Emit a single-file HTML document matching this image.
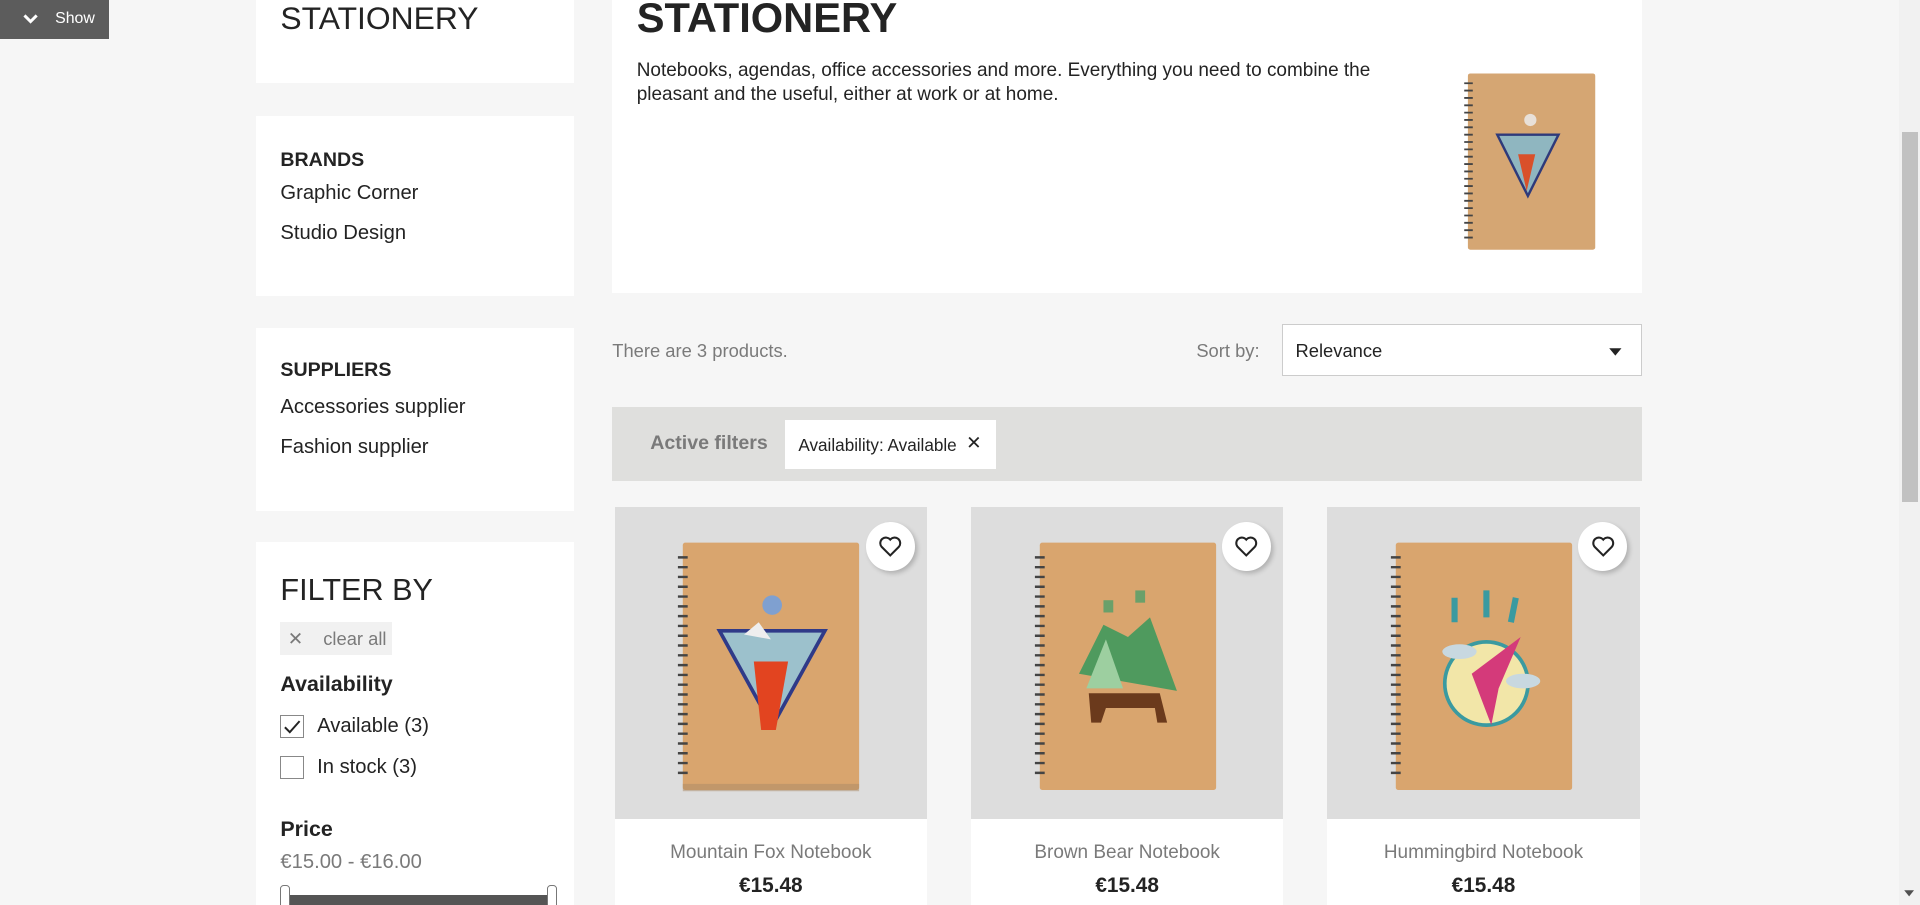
<!DOCTYPE html>
<html><head><meta charset="utf-8"><style>
html,body{margin:0;padding:0;background:#f6f6f6;overflow:hidden}
#w{zoom:1.22449;position:relative;width:1568px;height:739px;font-family:"Liberation Sans",sans-serif;color:#232323}
.a{position:absolute}
.card{position:absolute;background:#fff}
.t{position:absolute;white-space:nowrap}
</style></head><body><div id="w">
<div class="a" style="left:0;top:0;width:89px;height:32px;background:#5c5c5c"></div>
<svg class="a" style="left:18px;top:11px" width="14" height="10" viewBox="0 0 14 10"><path d="M2 2l5 5 5-5" stroke="#fff" stroke-width="2.4" fill="none"/></svg>
<div class="t" style="left:45px;top:8px;color:#fff;font-size:13px">Show</div>

<div class="card" style="left:209px;top:0;width:260px;height:68px"></div>
<div class="t" style="left:229px;top:0px;font-size:26px">STATIONERY</div>

<div class="card" style="left:209px;top:95px;width:260px;height:147px"></div>
<div class="t" style="left:229px;top:122px;font-size:16px;font-weight:bold">BRANDS</div>
<div class="t" style="left:229px;top:149px;font-size:16.5px">Graphic Corner</div>
<div class="t" style="left:229px;top:181px;font-size:16.5px">Studio Design</div>

<div class="card" style="left:209px;top:268px;width:260px;height:149px"></div>
<div class="t" style="left:229px;top:293px;font-size:16px;font-weight:bold">SUPPLIERS</div>
<div class="t" style="left:229px;top:323px;font-size:16.5px">Accessories supplier</div>
<div class="t" style="left:229px;top:356px;font-size:16.5px">Fashion supplier</div>

<div class="card" style="left:209px;top:443px;width:260px;height:300px"></div>
<div class="t" style="left:229px;top:468px;font-size:25px">FILTER BY</div>
<div class="a" style="left:229px;top:508px;width:91px;height:27px;background:#f1f1f1"></div>
<div class="t" style="left:235px;top:513px;font-size:15px;color:#7a7a7a">✕</div>
<div class="t" style="left:264px;top:513px;font-size:15px;color:#7a7a7a">clear all</div>
<div class="t" style="left:229px;top:549px;font-size:17.5px;font-weight:bold">Availability</div>
<div class="a" style="left:229px;top:584px;width:19px;height:19px;border:1px solid #888;box-sizing:border-box"></div>
<svg class="a" style="left:229px;top:584px" width="20" height="20"><path d="M4 10l4 4 8-9" stroke="#232323" stroke-width="1.6" fill="none"/></svg>
<div class="t" style="left:259px;top:584px;font-size:16.5px">Available (3)</div>
<div class="a" style="left:229px;top:617px;width:19px;height:19px;border:1px solid #888;box-sizing:border-box"></div>
<div class="t" style="left:259px;top:617px;font-size:16.5px">In stock (3)</div>
<div class="t" style="left:229px;top:667px;font-size:17.5px;font-weight:bold">Price</div>
<div class="t" style="left:229px;top:695px;font-size:16.5px;color:#7a7a7a">€15.00 - €16.00</div>
<div class="a" style="left:232px;top:731px;width:220px;height:8px;background:#555"></div>
<div class="a" style="left:229px;top:723px;width:6px;height:20px;border:1px solid #777;border-radius:3px;background:#fff"></div>
<div class="a" style="left:447px;top:723px;width:6px;height:20px;border:1px solid #777;border-radius:3px;background:#fff"></div>

<div class="card" style="left:500px;top:0;width:841px;height:239px"></div>
<div class="t" style="left:520px;top:-5px;font-size:34px;font-weight:bold">STATIONERY</div>
<div class="t" style="left:520px;top:48px;font-size:15.5px;line-height:20px;color:#232323">Notebooks, agendas, office accessories and more. Everything you need to combine the<br>pleasant and the useful, either at work or at home.</div>
<svg class="a" style="left:1195px;top:58px" width="110" height="148" viewBox="0 0 110 148">
<rect x="4" y="2" width="104" height="144" rx="2" fill="#d5a673"/>
<g stroke="#444" stroke-width="1.5">
<path d="M1 10h7M1 16h7M1 22h7M1 28h7M1 34h7M1 40h7M1 46h7M1 52h7M1 58h7M1 64h7M1 70h7M1 76h7M1 82h7M1 88h7M1 94h7M1 100h7M1 106h7M1 112h7M1 118h7M1 124h7M1 130h7M1 136h7"/></g>
<circle cx="55" cy="40" r="5" fill="#e8e0d8"/>
<path d="M28 52h50l-25 50z" fill="#8fb6c0" stroke="#2f3a7a" stroke-width="2"/>
<path d="M45 68h14l-7 30z" fill="#d9502a"/>
</svg>

<div class="t" style="left:500px;top:278px;font-size:15px;color:#7a7a7a">There are 3 products.</div>
<div class="t" style="left:977px;top:278px;font-size:15px;color:#7a7a7a">Sort by:</div>
<div class="a" style="left:1047px;top:265px;width:294px;height:42px;background:#fff;border:1px solid #ccc;box-sizing:border-box"></div>
<div class="t" style="left:1058px;top:278px;font-size:15px">Relevance</div>
<svg class="a" style="left:1313px;top:283px" width="12" height="8"><path d="M1 1h10L6 7z" fill="#232323"/></svg>

<div class="a" style="left:500px;top:332px;width:841px;height:61px;background:#dfdfdd"></div>
<div class="t" style="left:531px;top:353px;font-size:16px;font-weight:bold;color:#7a7a7a">Active filters</div>
<div class="a" style="left:641px;top:343px;width:172px;height:40px;background:#fff"></div>
<div class="t" style="left:652px;top:355px;font-size:14px">Availability: Available</div>
<div class="t" style="left:789px;top:353px;font-size:15px">✕</div>

<div class="card" style="left:502px;top:414px;width:255px;height:330px"></div>
<div class="card" style="left:793px;top:414px;width:255px;height:330px"></div>
<div class="card" style="left:1084px;top:414px;width:255px;height:330px"></div>
<div class="a" style="left:502px;top:414px;width:255px;height:255px;background:#ddd"></div>
<div class="a" style="left:793px;top:414px;width:255px;height:255px;background:#ddd"></div>
<div class="a" style="left:1084px;top:414px;width:255px;height:255px;background:#ddd"></div>

<svg class="a" style="left:550px;top:440px" width="160" height="208" viewBox="0 0 160 208">
<rect x="8" y="3" width="144" height="202" rx="2" fill="#d9a56e"/><rect x="8" y="200" width="144" height="6" fill="#aa8a66" opacity=".5"/>
<path d="M4 15h8M4 23h8M4 31h8M4 39h8M4 47h8M4 55h8M4 63h8M4 71h8M4 79h8M4 87h8M4 95h8M4 103h8M4 111h8M4 119h8M4 127h8M4 135h8M4 143h8M4 151h8M4 159h8M4 167h8M4 175h8M4 183h8M4 191h8" stroke="#444" stroke-width="2"/>
<circle cx="81" cy="54" r="8" fill="#7fa0d0"/>
<path d="M38 75h86l-43 78z" fill="#9cc1cc" stroke="#2f3a88" stroke-width="3"/>
<path d="M58 78l12 -10 10 14z" fill="#eee"/><path d="M66 100h28l-10 56h-12z" fill="#e24420"/>
</svg>
<svg class="a" style="left:841px;top:440px" width="160" height="208" viewBox="0 0 160 208">
<rect x="8" y="3" width="144" height="202" rx="2" fill="#d9a56e"/>
<path d="M4 15h8M4 23h8M4 31h8M4 39h8M4 47h8M4 55h8M4 63h8M4 71h8M4 79h8M4 87h8M4 95h8M4 103h8M4 111h8M4 119h8M4 127h8M4 135h8M4 143h8M4 151h8M4 159h8M4 167h8M4 175h8M4 183h8M4 191h8" stroke="#444" stroke-width="2"/>
<rect x="60" y="50" width="8" height="10" fill="#6aa06a"/><rect x="86" y="42" width="8" height="10" fill="#6aa06a"/>
<path d="M40 110l20-40 20 10 18-16 22 60z" fill="#4f9a5e"/><path d="M62 82l14 40h-30z" fill="#9dcfa0"/>
<path d="M48 126h58l6 24h-8l-2-12h-40l-4 12h-8z" fill="#6b3a1c"/>
</svg>
<svg class="a" style="left:1132px;top:440px" width="160" height="208" viewBox="0 0 160 208">
<rect x="8" y="3" width="144" height="202" rx="2" fill="#d9a56e"/>
<path d="M4 15h8M4 23h8M4 31h8M4 39h8M4 47h8M4 55h8M4 63h8M4 71h8M4 79h8M4 87h8M4 95h8M4 103h8M4 111h8M4 119h8M4 127h8M4 135h8M4 143h8M4 151h8M4 159h8M4 167h8M4 175h8M4 183h8M4 191h8" stroke="#444" stroke-width="2"/>
<path d="M56 48v20M82 42v22M106 48l-4 20" stroke="#3a9aa0" stroke-width="5"/>
<circle cx="82" cy="118" r="34" fill="#f2e6a8" stroke="#3a9aa0" stroke-width="3"/>
<path d="M70 110l40-30-18 42-6 30z" fill="#d43a7a"/>
<ellipse cx="60" cy="92" rx="14" ry="6" fill="#c8d8e0"/><ellipse cx="112" cy="116" rx="14" ry="6" fill="#c8d8e0"/>
</svg>

<div class="a" style="left:707px;top:426px;width:40px;height:40px;border-radius:50%;background:#fff;box-shadow:2px 2px 4px rgba(0,0,0,.2)"></div>
<div class="a" style="left:998px;top:426px;width:40px;height:40px;border-radius:50%;background:#fff;box-shadow:2px 2px 4px rgba(0,0,0,.2)"></div>
<div class="a" style="left:1289px;top:426px;width:40px;height:40px;border-radius:50%;background:#fff;box-shadow:2px 2px 4px rgba(0,0,0,.2)"></div>
<svg class="a" style="left:717px;top:436px" width="20" height="20" viewBox="0 0 24 24"><path d="M12 21l-8.5-8.5A5 5 0 0 1 12 5.5a5 5 0 0 1 8.5 7z" fill="none" stroke="#232323" stroke-width="2"/></svg>
<svg class="a" style="left:1008px;top:436px" width="20" height="20" viewBox="0 0 24 24"><path d="M12 21l-8.5-8.5A5 5 0 0 1 12 5.5a5 5 0 0 1 8.5 7z" fill="none" stroke="#232323" stroke-width="2"/></svg>
<svg class="a" style="left:1299px;top:436px" width="20" height="20" viewBox="0 0 24 24"><path d="M12 21l-8.5-8.5A5 5 0 0 1 12 5.5a5 5 0 0 1 8.5 7z" fill="none" stroke="#232323" stroke-width="2"/></svg>

<div class="t" style="left:502px;width:255px;text-align:center;top:688px;font-size:15.5px;color:#7a7a7a">Mountain Fox Notebook</div>
<div class="t" style="left:793px;width:255px;text-align:center;top:688px;font-size:15.5px;color:#7a7a7a">Brown Bear Notebook</div>
<div class="t" style="left:1084px;width:255px;text-align:center;top:688px;font-size:15.5px;color:#7a7a7a">Hummingbird Notebook</div>
<div class="t" style="left:502px;width:255px;text-align:center;top:714px;font-size:17px;font-weight:bold">€15.48</div>
<div class="t" style="left:793px;width:255px;text-align:center;top:714px;font-size:17px;font-weight:bold">€15.48</div>
<div class="t" style="left:1084px;width:255px;text-align:center;top:714px;font-size:17px;font-weight:bold">€15.48</div>

<div class="a" style="left:1551px;top:0;width:17px;height:739px;background:#f1f1f1"></div>
<div class="a" style="left:1553px;top:108px;width:13px;height:302px;background:#c1c1c1"></div>
<svg class="a" style="left:1554px;top:726px" width="10" height="8"><path d="M1 1h8L5 6z" fill="#505050"/></svg>
</div></body></html>
